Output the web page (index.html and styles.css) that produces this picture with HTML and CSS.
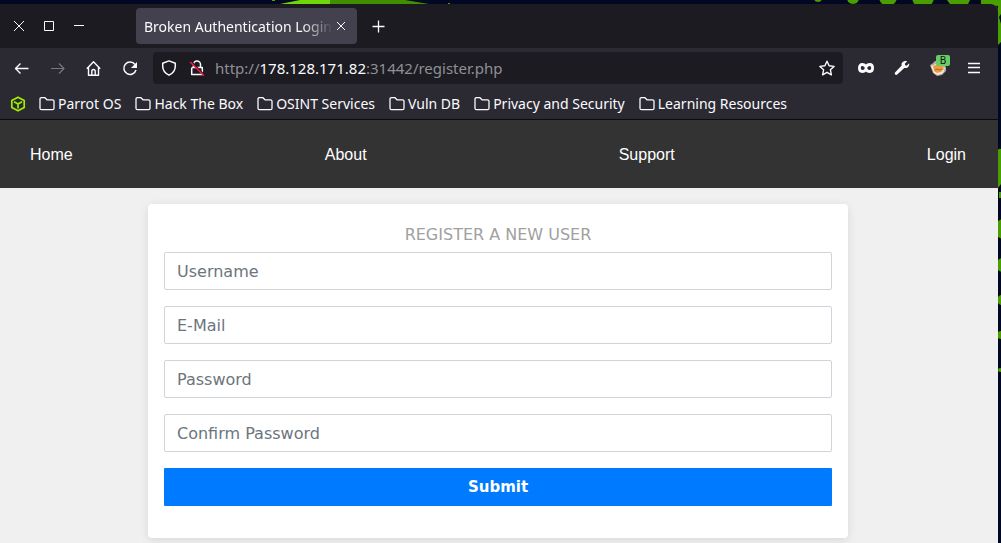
FILE: index.html
```
<!DOCTYPE html>
<html lang="en">
<head>
<meta charset="utf-8">
<meta name="viewport" content="width=device-width, initial-scale=1">
<title>Broken Authentication Login</title>
<link rel="stylesheet" href="styles.css">
</head>
<body>
<svg class="wall wall-left" width="240" height="8" viewBox="0 0 240 8" aria-hidden="true">
  <path d="M30 4 50 0h50v4z" fill="#6fd60a"/><path d="M80 0h75l24 4H80z" fill="#3f8f00"/>
  <path d="M22 0h3v1h-3zM198 3h2v1h-2z" fill="#4ca300"/>
</svg>
<svg class="wall wall-right" width="201" height="400" viewBox="0 0 201 400" aria-hidden="true">
  <g fill="#4a9f00">
    <circle cx="18" cy="-2" r="4"/><circle cx="53" cy="-2" r="6"/><circle cx="88" cy="-3" r="9"/><circle cx="123" cy="-3" r="11"/>
    <path d="M147 0h23l-2 4h-18zM181 0h20v14l-2 3 2 7v18l-3 3V6l-17-2z"/>
    <path d="M198 150q1-2 3-1v35l-3 4zM199 192h2v6h-2z"/>
    <circle cx="204" cy="229" r="10"/><circle cx="203" cy="265" r="7"/><circle cx="202" cy="300" r="5"/><circle cx="201" cy="335" r="4"/><circle cx="200" cy="370" r="2"/>
  </g>
</svg>
<div class="window">
  <header class="chrome">
    <div class="titlebar">
      <div class="controls">
        <button class="icon-btn" aria-label="Close window"><svg width="16" height="16" viewBox="0 0 16 16"><path d="M3 3l10 10M13 3 3 13"/></svg></button>
        <button class="icon-btn" aria-label="Maximize window"><svg width="16" height="16" viewBox="0 0 16 16"><path d="M3.500 3.500h9v9h-9z"/></svg></button>
        <button class="icon-btn" aria-label="Minimize window"><svg width="16" height="16" viewBox="0 0 16 16"><path d="M3 7.500h10"/></svg></button>
      </div>
      <div class="tab">
        <span class="tab-title">Broken Authentication Login</span>
        <button class="icon-btn" aria-label="Close tab"><svg width="16" height="16" viewBox="0 0 16 16"><path d="M4 4l8 8M12 4l-8 8"/></svg></button>
      </div>
      <button class="icon-btn new-tab" aria-label="New tab"><svg width="16" height="16" viewBox="0 0 16 16"><path d="M7.500 2.500v12M1.500 8.500h12" stroke-width="1.300"/></svg></button>
    </div>
    <div class="toolbar">
      <div class="history">
        <button class="icon-btn" aria-label="Back"><svg width="16" height="16" viewBox="0 0 16 16"><path d="M14.500 8.500H1.500M6.500 3.500l-5 5 5 5" stroke-width="1.400"/></svg></button>
        <button class="icon-btn dim" aria-label="Forward"><svg width="16" height="16" viewBox="0 0 16 16"><path d="M1 8.500h13M9 3.500l5 5-5 5" stroke-width="1.200"/></svg></button>
        <button class="icon-btn" aria-label="Home"><svg width="16" height="16" viewBox="0 0 16 16"><path d="M.8 8.800 7.500 1.800 14.200 8.800M2.500 7.500v7.700h10V7.500M5.800 15v-3.500q0-2 1.700-2t1.700 2V15" stroke-width="1.400"/></svg></button>
        <button class="icon-btn" aria-label="Reload"><svg width="16" height="16" viewBox="0 0 16 16"><path d="M13 4.500A6.200 6.200 0 1 0 14 10" stroke-width="1.500"/><path d="M15 2v6H9z" fill="currentColor" stroke="none"/></svg></button>
      </div>
      <div class="urlbar">
        <button class="icon-btn" aria-label="Tracking protection"><svg width="16" height="16" viewBox="0 0 16 16"><path d="M8 .9 14.300 3.300V6c0 4-2.500 7.300-6.300 9.200C4.200 13.300 1.700 10 1.700 6V3.300z" stroke-width="1.500"/></svg></button>
        <button class="icon-btn" aria-label="Connection is not secure"><svg width="16" height="16" viewBox="0 0 16 16"><path d="M4.500 7V4.500a3.500 3.500 0 0 1 7 0V7M3 7.500h10.300v7H2.700v-7" stroke-width="1.500"/><path d="M2 1.300 15.500 15" stroke="#1c1b22" stroke-width="1.500"/><path d="M1.300 2 15 15.700" stroke="#ff1744" stroke-width="1.500"/></svg></button>
        <div class="url" role="textbox" contenteditable="true" spellcheck="false" aria-label="Address">http://<span class="host">178.128.171.82</span>:31442/register.php</div>
        <button class="icon-btn" aria-label="Bookmark this page"><svg width="16" height="16" viewBox="0 0 16 16"><path d="m8 1.200 2.100 4.600 5 .6-3.700 3.400 1 5L8 12.300l-4.400 2.500 1-5L.9 6.400l5-.6z" stroke-width="1.400"/></svg></button>
      </div>
      <div class="actions">
        <button class="icon-btn" aria-label="Private browsing"><svg width="16" height="16" viewBox="0 0 16 16"><path d="M8 6.800C7 5 5.800 4.500 4.300 4.500 2.500 4.500 1.400 5.900 1.400 8s1.100 3.500 2.900 3.500C5.800 11.500 7 11 8 9.200c1 1.800 2.200 2.300 3.700 2.300 1.800 0 2.900-1.400 2.900-3.500s-1.100-3.500-2.900-3.500C10.200 4.500 9 5 8 6.800zM8 6v4" stroke-width="2.800"/></svg></button>
        <button class="icon-btn" aria-label="Developer tools"><svg width="16" height="16" viewBox="0 0 16 16"><path stroke="none" fill="currentColor" d="M13.200 1.300 10.800 3.800l.4 1.500 1.500.4 2.500-2.400c.5 3-1.800 5.500-4.900 4.600L3.500 14.300Q2 15.500 1 14.300T1.500 12L7.700 5.500C6.800 2.800 9.700.2 13.200 1.300z"/></svg></button>
        <button class="icon-btn ext" aria-label="FoxyProxy: B"><svg width="16" height="16" viewBox="0 0 16 16"><g stroke="none"><path fill="#b3aca0" d="m0 5 2-1 3-3h6l5 6v4l-4 4-5 1-4-3z"/><path fill="#f4ede2" d="m1 6 3-1 3-2 8 5-2 5-5 2-4-2z"/><path fill="#ee9a40" d="m3 6 5-2 5 2 1 3-3 3-4 1-3-2z"/></g><path d="m5 10 2-1 2 1 3-1" stroke="#b8601f" stroke-width="1"/></svg><span class="badge">B</span></button>
        <button class="icon-btn" aria-label="Open application menu"><svg width="16" height="16" viewBox="0 0 16 16"><path d="M2 3.500h12M2 7.500h12M2 12.500h12" stroke-width="1.300"/></svg></button>
      </div>
    </div>
    <div class="bookmarks">
      <svg class="htb" width="16" height="16" viewBox="0 0 16 16" aria-hidden="true"><path d="m8 1.200 6.200 3.300v7L8 14.800l-6.200-3.300v-7zM4 5.700l4 2.200 4-2.200M8 8v4.500"/></svg>
      <button class="bookmark"><svg width="16" height="16" viewBox="0 0 16 16"><path d="M1 3.200q0-1.500 1.500-1.500H6l2 2.100h5.500q1.500 0 1.500 1.500v6.900q0 1.500-1.500 1.500h-11Q1 13.700 1 12.200z"/></svg>Parrot OS</button>
      <button class="bookmark"><svg width="16" height="16" viewBox="0 0 16 16"><path d="M1 3.200q0-1.500 1.500-1.500H6l2 2.100h5.500q1.500 0 1.500 1.500v6.900q0 1.500-1.500 1.500h-11Q1 13.700 1 12.200z"/></svg>Hack The Box</button>
      <button class="bookmark"><svg width="16" height="16" viewBox="0 0 16 16"><path d="M1 3.200q0-1.500 1.500-1.500H6l2 2.100h5.500q1.500 0 1.500 1.500v6.900q0 1.500-1.500 1.500h-11Q1 13.700 1 12.200z"/></svg>OSINT Services</button>
      <button class="bookmark"><svg width="16" height="16" viewBox="0 0 16 16"><path d="M1 3.200q0-1.500 1.500-1.500H6l2 2.100h5.500q1.500 0 1.500 1.500v6.900q0 1.500-1.500 1.500h-11Q1 13.700 1 12.200z"/></svg>Vuln DB</button>
      <button class="bookmark"><svg width="16" height="16" viewBox="0 0 16 16"><path d="M1 3.200q0-1.500 1.500-1.500H6l2 2.100h5.500q1.500 0 1.500 1.500v6.900q0 1.500-1.500 1.500h-11Q1 13.700 1 12.200z"/></svg>Privacy and Security</button>
      <button class="bookmark"><svg width="16" height="16" viewBox="0 0 16 16"><path d="M1 3.200q0-1.500 1.500-1.500H6l2 2.100h5.500q1.500 0 1.500 1.500v6.900q0 1.500-1.500 1.500h-11Q1 13.700 1 12.200z"/></svg>Learning Resources</button>
    </div>
  </header>
  <nav class="site-nav">
    <a href="#home">Home</a>
    <a href="#about">About</a>
    <a href="#support">Support</a>
    <a href="#login">Login</a>
  </nav>
  <main class="page">
    <form class="card">
      <h1 class="card-title">REGISTER A NEW USER</h1>
      <input class="field" type="text" placeholder="Username" aria-label="Username">
      <input class="field" type="email" placeholder="E-Mail" aria-label="E-Mail">
      <input class="field" type="password" placeholder="Password" aria-label="Password">
      <input class="field" type="password" placeholder="Confirm Password" aria-label="Confirm Password">
      <button class="submit" type="submit">Submit</button>
    </form>
  </main>
</div>
</body>
</html>
```
FILE: styles.css
```
* { box-sizing: border-box; }
body {
  margin: 0;
  min-height: 100vh;
  padding: 4px 3px 0 0;
  display: flex;
  background: #020823;
  overflow: hidden;
}
.wall { position: absolute; top: 0; }
.wall-left { left: 250px; }
.wall-right { right: 0; }
.window {
  position: relative;
  flex: 1;
  min-width: 0;
  display: flex;
  flex-direction: column;
  border-radius: 0 8px 0 0;
  overflow: hidden;
  background: #f0f0f0;
}
.chrome {
  background: #2b2a33;
  color: #fbfbfe;
  font-family: "Noto Sans", sans-serif;
  font-size: 14px;
  line-height: 20px;
  border-bottom: 1px solid #0c0c0d;
}
.chrome svg {
  display: block;
  flex: none;
  fill: none;
  stroke: currentColor;
  stroke-linejoin: round;
}
button {
  margin: 0;
  padding: 0;
  border: 0;
  background: none;
  color: inherit;
  font: inherit;
  cursor: pointer;
}
.icon-btn { flex: none; display: block; }
.dim { color: #77767e; }
.titlebar {
  display: flex;
  align-items: center;
  height: 44px;
  padding-left: 11px;
  background: #1c1b22;
}
.controls { display: flex; gap: 14px; width: 125px; }
.tab {
  display: flex;
  align-items: center;
  width: 221px;
  height: 36px;
  padding: 0 8px;
  border-radius: 4px;
  background: #42414d;
}
.tab-title {
  flex: 1;
  min-width: 0;
  padding-top: 2px;
  overflow: hidden;
  white-space: nowrap;
  -webkit-mask-image: linear-gradient(to left, transparent, #000 32px);
  mask-image: linear-gradient(to left, transparent, #000 32px);
}
.new-tab { margin-left: 14px; }
.toolbar {
  display: flex;
  align-items: center;
  padding: 4px 16px 0 14px;
}
.history { display: flex; gap: 20px; width: 139px; }
.urlbar {
  flex: 1;
  min-width: 0;
  display: flex;
  align-items: center;
  gap: 12px;
  height: 32px;
  padding: 0 8px;
  border-radius: 4px;
  background: #1c1b22;
}
.url {
  flex: 1;
  min-width: 0;
  margin-left: -2px;
  overflow: hidden;
  white-space: nowrap;
  color: #8f8f94;
  font-size: 15px;
  outline: 0;
}
.host { color: #fbfbfe; }
.actions { display: flex; align-items: center; gap: 20px; margin-left: 15px; }
.ext { position: relative; width: 16px; height: 16px; }
.badge {
  position: absolute;
  left: 6px;
  top: -5px;
  width: 14px;
  border-radius: 2px;
  background: #66cc66;
  color: #111;
  font-size: 10px;
  line-height: 11px;
}
.bookmarks {
  display: flex;
  align-items: center;
  gap: 14px;
  height: 35px;
  padding: 4px 10px 0;
}
.htb { color: #9fef00; stroke-width: 1.7; margin-right: -1px; }
.bookmark { display: flex; align-items: center; gap: 3px; white-space: nowrap; }
.bookmark svg { stroke-width: 1.3; }
.site-nav {
  display: flex;
  justify-content: space-between;
  padding: 25px 32px 23px 30px;
  background: #333;
  font: 16px/20px "Liberation Sans", Arial, sans-serif;
}
.site-nav a { color: #fff; text-decoration: none; }
.page { padding: 16px 18px 16px 16px; }
.card {
  display: flex;
  flex-direction: column;
  gap: 16px;
  max-width: 700px;
  margin: 0 auto;
  padding: 19px 16px 32px;
  border-radius: 4px;
  background: #fff;
  box-shadow: 0 2px 10px rgba(0, 0, 0, 0.1);
  font: 16px/24px "DejaVu Sans", sans-serif;
}
.card-title {
  margin: 0 0 -11px;
  color: #a0a0a0;
  font-size: 16px;
  font-weight: 400;
  text-align: center;
}
.field {
  width: 100%;
  height: 38px;
  padding: 6px 12px;
  border: 1px solid #ced4da;
  border-radius: 2px;
  color: #495057;
  font: inherit;
}
.field::placeholder { color: #6c757d; opacity: 1; }
.submit {
  height: 38px;
  border-radius: 1px;
  background: #007bff;
  color: #fff;
  font-size: 15px;
  font-weight: 700;
}
```
